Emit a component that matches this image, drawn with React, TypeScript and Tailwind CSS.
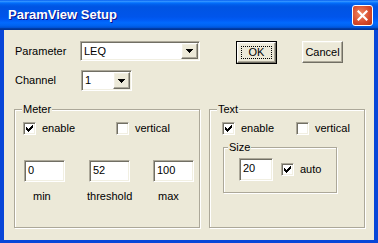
import React from "react";

const sunken =
  "border border-t-[#aca899] border-l-[#aca899] border-r-white border-b-white shadow-[inset_1px_1px_0_#716f64,inset_-1px_-1px_0_#f1efe2]";
const raised =
  "border border-t-white border-l-white border-r-[#716f64] border-b-[#716f64] shadow-[inset_-1px_-1px_0_#aca899,inset_1px_1px_0_#f1efe2]";
const etched = "border border-[#aca899] shadow-[inset_1px_1px_0_#fff,1px_1px_0_#fff]";

function Arrow() {
  return (
    <svg width="7" height="4" viewBox="0 0 7 4" shapeRendering="crispEdges">
      <path d="M0 0h7v1H0zM1 1h5v1H1zM2 2h3v1H2zM3 3h1v1H3z" fill="#000" />
    </svg>
  );
}

function Combo({ value, className }: { value: string; className: string }) {
  return (
    <div className={`${sunken} ${className} bg-white flex items-stretch p-px`}>
      <span className="flex-1 pl-[2px] leading-[16px]">{value}</span>
      <div className={`${raised} w-[17px] bg-[#ece9d8] flex items-center justify-center`}>
        <Arrow />
      </div>
    </div>
  );
}

function CheckBox({ checked, label, className = "" }: { checked: boolean; label: string; className?: string }) {
  return (
    <div className={`flex items-center ${className}`}>
      <div className={`${sunken} w-[13px] h-[13px] bg-white flex items-center justify-center shrink-0`}>
        {checked && (
          <svg width="7" height="7" viewBox="0 0 7 7" shapeRendering="crispEdges">
            <path d="M6 0h1v3H6zM5 1h1v3H5zM4 2h1v3H4zM3 3h1v3H3zM2 4h1v3H2zM1 3h1v3H1zM0 2h1v3H0z" fill="#000" />
          </svg>
        )}
      </div>
      <span className="ml-[6px] leading-[13px]">{label}</span>
    </div>
  );
}

function Edit({ value, className }: { value: string; className: string }) {
  return (
    <div className={`${sunken} ${className} bg-white pl-[3px] pt-[3px] leading-[13px]`}>{value}</div>
  );
}

function Group({ title, className, children, legend = "left-[7px]" }: { title: string; className: string; children: React.ReactNode; legend?: string }) {
  return (
    <div className={`${etched} relative ${className}`}>
      <span className={`absolute top-[-7px] ${legend} px-[1px] bg-[#ece9d8] leading-[13px]`}>{title}</span>
      {children}
    </div>
  );
}

export default function App() {
  return (
    <div
      className="w-[378px] h-[243px] flex flex-col bg-[#0846d8] text-[11px] text-black"
      style={{ fontFamily: '"Liberation Sans", Arial, sans-serif' }}
    >
      {/* Title bar */}
      <div className="h-[30px] shrink-0 flex items-center justify-between pl-[8px] pr-[5px] bg-[linear-gradient(to_bottom,#0058ee_0%,#3593ff_4%,#288eff_6%,#127dff_8%,#036ffc_10%,#0262ee_14%,#0057e5_20%,#0054e3_24%,#0055eb_56%,#005bf5_66%,#026afe_76%,#0062ef_86%,#0052d6_92%,#0040ab_94%,#003092_100%)]">
        <span className="text-white font-bold text-[13px] [text-shadow:1px_1px_0_#0f1089]">ParamView Setup</span>
        <div className="w-[21px] h-[21px] rounded-[3px] border border-white bg-[radial-gradient(circle_at_40%_40%,#f08a64,#d6482a_60%,#b73514)] flex items-center justify-center">
          <svg width="11" height="11" viewBox="0 0 11 11">
            <path d="M1.5 1.5l8 8M9.5 1.5l-8 8" stroke="#fff" strokeWidth="2.2" strokeLinecap="square" />
          </svg>
        </div>
      </div>

      {/* Body */}
      <div className="flex-1 mx-[4px] mb-[3px] bg-[#ece9d8] pl-[10px] pt-[11px]">
        <div className="flex items-start">
          <span className="w-[66px] pl-px leading-[20px]">Parameter</span>
          <Combo value="LEQ" className="w-[120px] h-[20px]" />
          <div className="ml-[36px] w-[41px] h-[23px] border border-black flex">
            <div className={`${raised} flex-1 bg-[#ece9d8] p-[3px] flex`}>
              <div className="flex-1 border border-dotted border-black flex items-center justify-center leading-[13px]">
                OK
              </div>
            </div>
          </div>
          <div className={`${raised} ml-[25px] w-[41px] h-[22px] bg-[#ece9d8] flex items-center justify-center`}>
            Cancel
          </div>
        </div>

        <div className="flex items-center mt-[6px]">
          <span className="w-[67px] pl-px leading-[21px]">Channel</span>
          <Combo value="1" className="w-[51px] h-[21px]" />
        </div>

        <div className="flex mt-[18px]">
          <Group title="Meter" className="w-[186px] h-[119px] pt-[12px] pl-[8px]">
            <div className="flex">
              <CheckBox checked label="enable" className="w-[93px]" />
              <CheckBox checked={false} label="vertical" />
            </div>
            <div className="flex mt-[25px] ml-px">
              <Edit value="0" className="w-[41px] h-[22px]" />
              <Edit value="52" className="w-[41px] h-[22px] ml-[24px]" />
              <Edit value="100" className="w-[41px] h-[22px] ml-[23px]" />
            </div>
            <div className="flex mt-[8px] leading-[13px]">
              <span className="ml-[10px] w-[54px]">min</span>
              <span className="w-[71px]">threshold</span>
              <span>max</span>
            </div>
          </Group>

          <Group title="Text" className="ml-[9px] w-[156px] h-[119px] pt-[12px] pl-[12px]">
            <div className="flex">
              <CheckBox checked label="enable" className="w-[74px]" />
              <CheckBox checked={false} label="vertical" />
            </div>
            <Group title="Size" legend="left-[4px]" className="mt-[12px] ml-[1px] w-[114px] h-[46px] pt-[10px] pl-[15px]">
              <div className="flex items-center">
                <Edit value="20" className="w-[34px] h-[23px]" />
                <CheckBox checked label="auto" className="ml-[8px]" />
              </div>
            </Group>
          </Group>
        </div>
      </div>
    </div>
  );
}
